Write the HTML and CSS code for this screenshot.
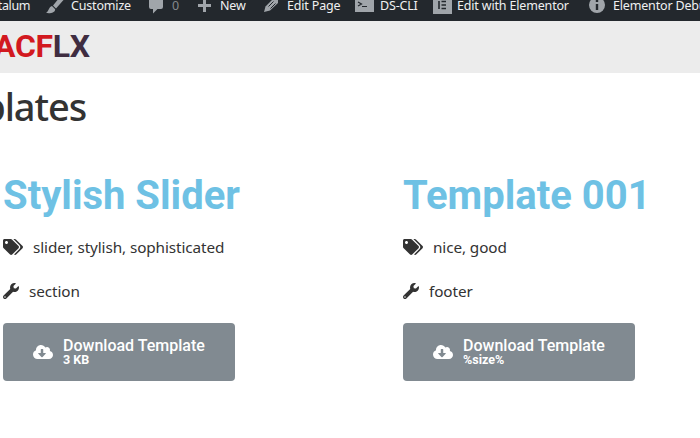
FILE: index.html
```
<!DOCTYPE html>
<html lang="en">
<head>
<meta charset="utf-8">
<title>Templates</title>
<link rel="stylesheet" href="styles.css">
</head>
<body>
<svg class="defs" width="0" height="0">
  <symbol id="tags" viewBox="0 0 640 512"><path d="M497.941 225.941L286.059 14.059A48 48 0 0 0 252.118 0H48C21.49 0 0 21.49 0 48v204.118a48 48 0 0 0 14.059 33.941l211.882 211.882c18.744 18.745 49.136 18.746 67.882 0l204.118-204.118c18.745-18.745 18.745-49.137 0-67.882zM112 160c-26.51 0-48-21.49-48-48s21.49-48 48-48 48 21.49 48 48-21.49 48-48 48zm513.941 133.823L421.823 497.941c-18.745 18.745-49.137 18.745-67.882 0l-.36-.36L527.64 323.522c16.999-16.999 26.36-39.6 26.36-63.64s-9.362-46.641-26.36-63.64L331.397 0h48.721a48 48 0 0 1 33.941 14.059l211.882 211.882c18.745 18.745 18.745 49.137 0 67.882z"/></symbol>
  <symbol id="wrench" viewBox="0 0 512 512"><path d="M507.73 109.1c-2.24-9.03-13.54-12.09-20.12-5.51l-74.36 74.36-67.88-11.31-11.31-67.88 74.36-74.36c6.62-6.62 3.43-17.9-5.66-20.16-47.38-11.74-99.55.91-136.58 37.93-39.64 39.64-50.55 97.1-34.05 147.2L18.74 402.76c-24.99 24.99-24.99 65.51 0 90.5 24.99 24.99 65.51 24.99 90.5 0l213.21-213.21c50.12 16.71 107.47 5.68 147.37-34.22 37.07-37.07 49.7-89.32 37.91-136.73zM64 472c-13.25 0-24-10.75-24-24 0-13.26 10.75-24 24-24s24 10.74 24 24c0 13.25-10.75 24-24 24z"/></symbol>
  <symbol id="cloud" viewBox="0 0 640 512"><path d="M537.6 226.6c4.1-10.7 6.4-22.4 6.4-34.6 0-53-43-96-96-96-19.7 0-38.1 6-53.3 16.2C367 64.2 315.3 32 256 32c-88.4 0-160 71.6-160 160 0 2.7.1 5.4.2 8.1C40.2 219.8 0 273.2 0 336c0 79.5 64.5 144 144 144h368c70.7 0 128-57.3 128-128 0-61.9-44-113.6-102.4-125.4zm-132.9 88.7L299.3 420.7c-6.2 6.2-16.4 6.2-22.6 0L171.3 315.3c-10.1-10.1-2.9-27.3 11.3-27.3H248V176c0-8.8 7.2-16 16-16h48c8.8 0 16 7.2 16 16v112h65.4c14.2 0 21.4 17.2 11.3 27.3z"/></symbol>
</svg>
<nav class="adminbar">
  <div class="item site"><span>talum</span></div>
  <div class="item customize"><svg width="25" height="21"><path d="M15 0h2.500L10 8.500 7 5.500 11.500 0zM6 6l3.200 3.200C9 13 4.500 13.500 0 13c3-2 2.500-6 6-7z"/></svg><span>Customize</span></div>
  <div class="item comments"><svg width="24" height="21"><path d="M1 0h14v7q0 2-2 2H9.500L5 13.500V9H3Q1 9 1 7z"/></svg><span class="count">0</span></div>
  <div class="item new"><svg width="22" height="21"><path d="M5 0h3v4h5v3H8v5H5V7H0V4h5z"/></svg><span>New</span></div>
  <div class="item edit"><svg width="23" height="21"><path d="M8 0h6v3L6 10.500 0 12l1.500-5.500z"/><path class="cut" d="M4.500 6.500l5-5M6.500 8.500l5-5"/></svg><span>Edit Page</span></div>
  <div class="item cli"><svg width="25" height="21"><path d="M0 0h19v12H0z"/><path class="ink thin" d="M3 2l3.500 2L3 6M7 6.500h5"/></svg><span>DS-CLI</span></div>
  <div class="item elementor"><svg width="24" height="21"><path d="M0 0h19v14H0z"/><path class="ink" d="M6 1v8M8.500 1.500H13M8.500 5H13M8.500 8.500H13"/></svg><span>Edit with Elementor</span></div>
  <div class="item debug"><svg width="24" height="21"><circle cx="8" cy="5" r="8"/><path class="ink stem" d="M8 4v6M8 0v2"/></svg><span>Elementor Debu</span></div>
</nav>
<header class="brand"><span class="acf">ACF</span><span>LX</span></header>
<main>
  <h1>plates</h1>
  <div class="cards">
    <article>
      <h2>Stylish Slider</h2>
      <p><svg width="20" height="16"><use href="#tags"/></svg><span>slider, stylish, sophisticated</span></p>
      <p><svg width="16" height="16"><use href="#wrench"/></svg><span>section</span></p>
      <a class="button"><svg width="20" height="16"><use href="#cloud"/></svg><span class="label"><span>Download Template</span><small>3 KB</small></span></a>
    </article>
    <article>
      <h2>Template 001</h2>
      <p><svg width="20" height="16"><use href="#tags"/></svg><span>nice, good</span></p>
      <p><svg width="16" height="16"><use href="#wrench"/></svg><span>footer</span></p>
      <a class="button"><svg width="20" height="16"><use href="#cloud"/></svg><span class="label"><span>Download Template</span><small>%size%</small></span></a>
    </article>
  </div>
</main>
</body>
</html>
```
FILE: styles.css
```
* { box-sizing: border-box; }
body { margin: 0; height: 438px; overflow: hidden; background: #fff; color: #333; font-family: "Noto Sans", sans-serif; }
svg { display: block; flex: none; fill: currentColor; }
.defs { position: absolute; }
.adminbar { display: grid; grid-template-columns: 46px 102px 50px 66px 91px 78px 156px 111px; height: 21px; overflow: hidden; background: #23282d; color: #f0f0f1; font-size: 12.5px; line-height: 18px; letter-spacing: -0.17px; }
.item { display: flex; align-items: flex-start; min-width: 0; white-space: nowrap; }
.item span { margin-top: -3px; }
.item svg { fill: #a0a5aa; }
.item .ink { fill: none; stroke: #23282d; stroke-width: 1.6; }
.item .thin { stroke-width: 1.2; }
.item .stem { stroke-width: 2.4; }
.item .cut { fill: none; stroke: #23282d; stroke-width: 1; }
.item.site { width: 30px; justify-content: flex-end; letter-spacing: -0.4px; }
.debug { overflow: hidden; }
.count { color: #84888c; }
.brand { height: 52px; background: #ececec; color: #3f2d41; font: 700 32px/51px Roboto, sans-serif; letter-spacing: -0.3px; }
.brand .acf { margin-left: -6px; color: #d2191f; }
h1 { display: flex; justify-content: flex-end; width: 86px; height: 99px; margin: 0; padding-top: 6px; font-size: 38px; line-height: 54px; font-weight: 500; letter-spacing: -1.1px; }
.cards { display: grid; grid-template-columns: 400px 297px; padding-left: 3px; }
h2 { margin: 0 0 15px; font: 700 40px/48px Roboto, sans-serif; color: #6ec1e4; white-space: nowrap; }
p { display: flex; align-items: center; gap: 10px; height: 24px; margin: 0 0 20px; font-size: 15.3px; white-space: nowrap; letter-spacing: -0.1px; }
.button { display: flex; align-items: center; gap: 10px; width: 232px; height: 58px; padding-left: 30px; border-radius: 4px; background: #818a91; color: #fff; }
.label { display: flex; flex-direction: column; font: 500 16px/16px Roboto, sans-serif; white-space: nowrap; }
.label small { font-size: 12.5px; line-height: 12px; font-weight: 700; }
```
